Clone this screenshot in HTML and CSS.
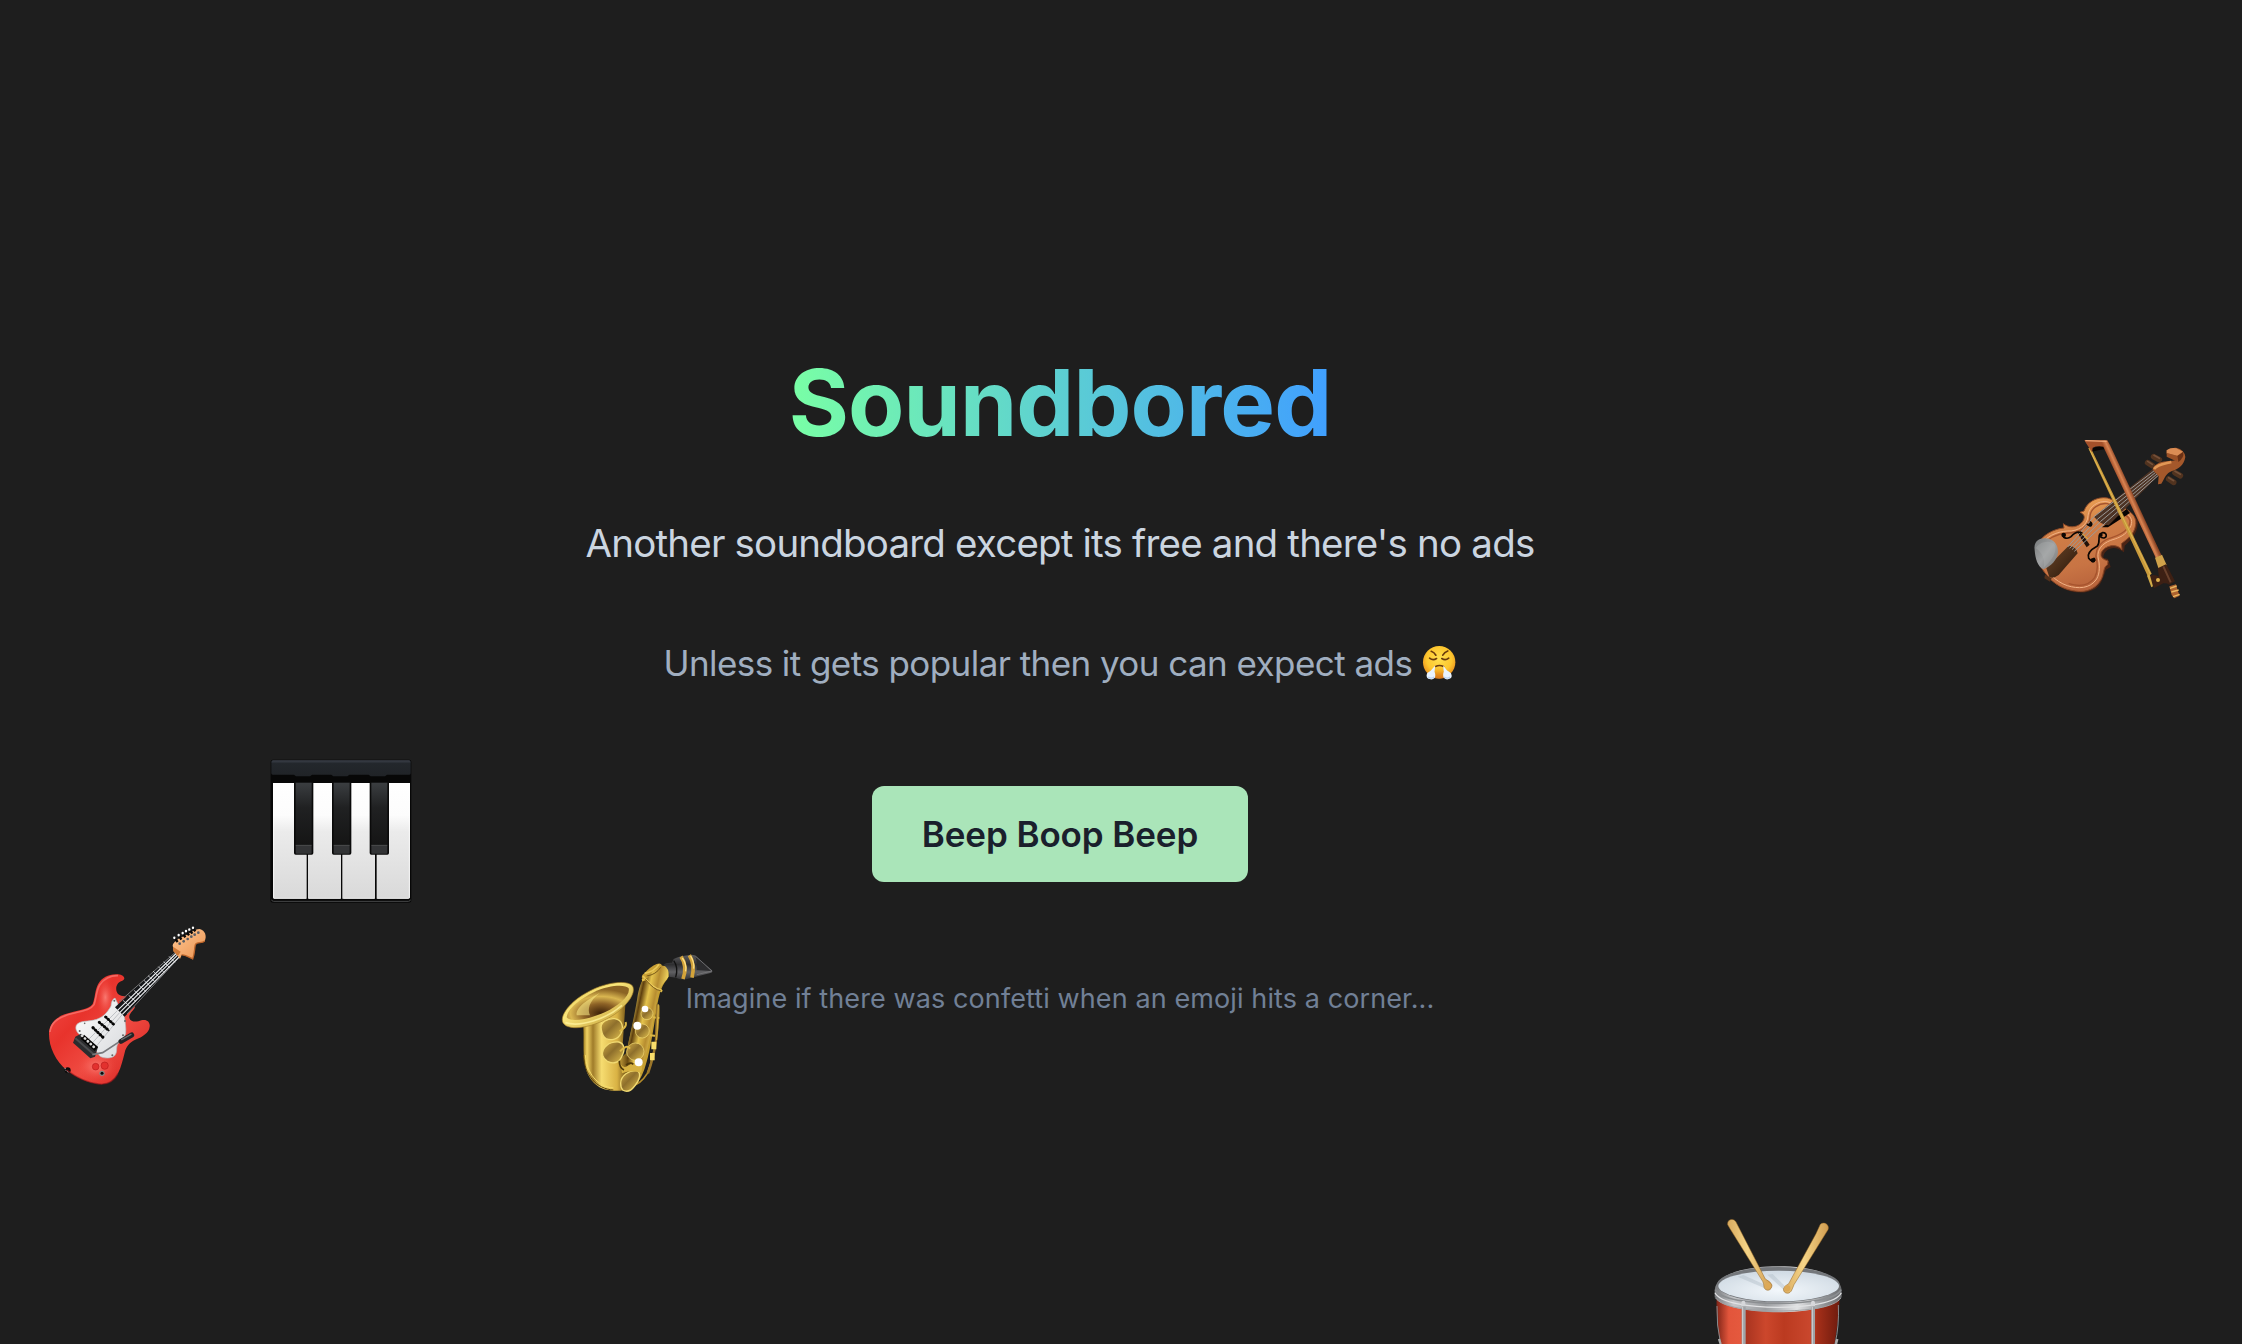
FILE: index.html
```
<!DOCTYPE html>
<html lang="en">
<head>
<meta charset="utf-8">
<title>Soundbored</title>
<link rel="stylesheet" href="styles.css">
</head>
<body>
<main class="hero">
  <h1 class="title">Soundbored</h1>
  <p class="lead">Another soundboard except its free and there's no ads</p>
  <p class="sub">Unless it gets popular then you can expect ads
    <svg class="face" viewBox="66 42 104 106">
      <defs>
        <radialGradient id="fc" cx=".5" cy=".4" r=".6"><stop offset="0" stop-color="#ffe04f"/><stop offset=".65" stop-color="#fdc62e"/><stop offset="1" stop-color="#e98c1a"/></radialGradient>
        <linearGradient id="fn" x1="0" y1="0" x2="0" y2="1"><stop offset="0" stop-color="#e88f1d" stop-opacity="0"/><stop offset="1" stop-color="#d9791b"/></linearGradient>
      </defs>
      <circle cx="117" cy="94" r="49" fill="url(#fc)"/>
      <path d="M98 108h38l-4 34q-15 4-30 0z" fill="url(#fn)"/>
      <g fill="none" stroke="#6b3a0c" stroke-width="5" stroke-linecap="round"><path d="M93 61q9 3 14 12M143 60q-10 3-15 13M88 82q10 8 21 1M125 83q11 7 21-1M106 107q12-6 24 0"/></g>
      <g fill="#eaf4ff"><path d="M105 104l-2 19q4 10 1 18-8 8-16 4-9-1-9-10-1-9 8-12l5-4z"/><path d="M129 104l2 19q-4 10 0 18 8 8 15 4 9-2 9-10 0-9-8-12l-6-4z"/></g>
      <path d="M84 139q8 7 18 0M132 139q9 7 18 0" fill="none" stroke="#b9d2f3" stroke-width="4"/>
    </svg></p>
  <button class="cta" type="button">Beep Boop Beep</button>
  <p class="note">Imagine if there was confetti when an emoji hits a corner...</p>
</main>

<svg class="emoji guitar" viewBox="0 0 570 570">
  <defs>
    <linearGradient id="gb" x1="0" y1="0" x2="1" y2="1"><stop offset="0" stop-color="#f4504c"/><stop offset=".35" stop-color="#e8332c"/><stop offset=".6" stop-color="#ef4a41"/><stop offset="1" stop-color="#d5201d"/></linearGradient>
    <radialGradient id="gs"><stop offset="0" stop-color="#ff8f86" stop-opacity=".75"/><stop offset="1" stop-color="#f0443c" stop-opacity="0"/></radialGradient>
    <linearGradient id="gh" x1="0" y1="0" x2="1" y2="1"><stop offset="0" stop-color="#ffc793"/><stop offset="1" stop-color="#eb9350"/></linearGradient>
    <linearGradient id="gp" x1="0" y1="0" x2="1" y2="1"><stop offset="0" stop-color="#fff"/><stop offset="1" stop-color="#d8dadd"/></linearGradient>
  </defs>
  <path d="M57 368C58 342 78 322 104 313C140 300 176 300 188 282C196 262 194 240 205 221C216 202 240 190 264 193C284 195 289 208 275 213C258 218 254 240 264 252C276 262 292 256 300 264C308 280 316 284 314 294C306 306 296 312 298 324C302 338 322 336 334 331C350 326 361 336 359 350C357 368 338 380 319 388C296 398 288 412 284 428C278 450 274 470 264 490C252 512 232 525 207 522C170 518 140 503 110 480C76 452 56 410 57 368Z" fill="url(#gb)"/>
  <circle cx="113" cy="481" r="9" fill="#0b0b0b"/><path d="M105 474l3 8 9 6" stroke="#bbb" stroke-width="3" stroke-dasharray="3 3" fill="none"/>
  <path d="M60 366C62 344 80 326 106 317C142 304 180 304 192 284C200 262 198 244 209 225C220 207 242 196 264 197" fill="none" stroke="#ff8a84" stroke-width="5" opacity=".6"/>
  <ellipse cx="200" cy="470" rx="60" ry="46" fill="url(#gs)"/><ellipse cx="226" cy="262" rx="28" ry="62" fill="url(#gs)"/>
  <path d="M264 490C252 512 232 525 207 522C170 518 140 503 110 480" fill="none" stroke="#a5161a" stroke-width="4" opacity=".6"/>
  <path d="M255 264C246 268 244 278 243 288C232 307 222 319 200 328C176 336 148 330 139 346C133 361 146 372 154 379C176 398 196 420 210 439C222 446 242 446 253 438C264 426 257 414 263 403C270 390 283 384 287 371C289 352 285 335 283 320Z" fill="url(#gp)" stroke="#b7babd" stroke-width="2"/>
  <path d="M434 124L452 143L284 320L255 292Z" fill="#15171a"/>
  <path d="M267 276L437 126M448 142L291 312" stroke="#777" stroke-width="3"/>
  <g stroke="#eef0f2" stroke-width="4.200"><path d="M440 129L262 302M444 134L269 308M449 139L277 313" stroke-width="3.400"/><path d="M417 139l18 18M401 155l18 18M385 170l18 18M369 183l18 18M354 197l22 19M342 211l20 19M327 226l22 20M312 241l21 19M296 256l22 19M279 271l22 20" stroke-width="2.200"/></g>
  <path d="M262 302L160 404M277 313L190 420M269 308L176 411" stroke="#bfc2c6" stroke-width="3"/>
  <path d="M227 321l26 24M208 337l30 26M189 353l31 30" stroke="#070707" stroke-width="9" stroke-linecap="round" stroke-dasharray="1 9"/>
  <path d="M227 321l26 24M208 337l30 26M189 353l31 30" stroke="#070707" stroke-width="4"/>
  <path d="M136 380L153 371L204 411L195 440L181 445L129 398Z" fill="#2b2c2e"/><path d="M136 385L190 432" stroke="#4b4c4e" stroke-width="6"/>
  <path d="M157 380L199 417" stroke="#050505" stroke-width="16"/><path d="M156 377L199 418" stroke="#ddd" stroke-width="8" stroke-linecap="round" stroke-dasharray="1 11"/>
  <path d="M187 434L218 428L273 392" fill="none" stroke="#77797c" stroke-width="5"/><path d="M273 394L305 375" stroke="#222426" stroke-width="15" stroke-linecap="round"/><path d="M275 389l28-16" stroke="#66696b" stroke-width="4" stroke-linecap="round"/>
  <g fill="#e3312e" stroke="#b91d1d" stroke-width="2"><circle cx="197" cy="470" r="10"/><circle cx="224" cy="467" r="11"/></g><circle cx="216" cy="490" r="8" fill="#888"/><circle cx="216" cy="490" r="4.500" fill="#090909"/>
  <g fill="#666"><circle cx="149" cy="363" r="3"/><circle cx="164" cy="340" r="2.500"/><circle cx="247" cy="436" r="3"/><circle cx="279" cy="376" r="3"/><circle cx="285" cy="333" r="3"/><circle cx="253" cy="272" r="3"/></g>
  <path d="M428 106C432 93 446 85 465 77C482 69 492 58 509 57C526 61 531 80 524 93C516 101 500 95 496 104C493 118 494 133 488 147C476 141 463 133 455 135L450 147L443 137L431 124Z" fill="url(#gh)"/>
  <path d="M524 93C516 101 500 95 496 104C493 118 494 133 488 147C476 141 463 133 455 135" fill="none" stroke="#bd652a" stroke-width="4"/>
  <path d="M429 110L452 125L444 138L430 124Z" fill="#cf7836"/>
  <g stroke="#080808" stroke-width="7"><path d="M433 83l10 13M446 76l8 13M458 70l8 12M469 64l8 12M479 60l8 11M488 53l8 11"/></g>
  <g stroke="#fff" stroke-width="7" stroke-linecap="round"><path d="M433 83v1M446 75v1M458 69v1M468 63v1M478 58v1M489 53v1"/></g>
  <g fill="#575c64"><circle cx="449" cy="101" r="4"/><circle cx="461" cy="94" r="4"/><circle cx="473" cy="87" r="4"/><circle cx="484" cy="80" r="4"/><circle cx="494" cy="74" r="4"/><circle cx="505" cy="68" r="4"/></g>
</svg>

<svg class="emoji piano" viewBox="0 0 510 510">
  <defs>
    <linearGradient id="pw" x1="0" y1="0" x2="0" y2="1"><stop offset="0" stop-color="#fff"/><stop offset=".28" stop-color="#fcfcfc"/><stop offset=".42" stop-color="#ebebeb"/><stop offset="1" stop-color="#d9d9d9"/></linearGradient>
    <linearGradient id="pk" x1="0" y1="0" x2="0" y2="1"><stop offset="0" stop-color="#3b3e41"/><stop offset=".4" stop-color="#202122"/><stop offset="1" stop-color="#151515"/></linearGradient>
    <linearGradient id="pt" x1="0" y1="0" x2="0" y2="1"><stop offset="0" stop-color="#3c414b"/><stop offset=".2" stop-color="#23272c"/><stop offset="1" stop-color="#202327"/></linearGradient>
    <g id="bk"><path d="M0 110h58v214q0 5-5 5H5q-5 0-5-5z" fill="#0a0a0a"/><path d="M5 113h48v186H5z" fill="url(#pk)"/><path d="M5 302h48v21q0 3-3 3H8q-3 0-3-3z" fill="#333436"/><path d="M5 301h48" stroke="#515254" stroke-width="3"/></g>
  </defs>
  <path d="M47 50q0-6 6-6h410q6 0 6 6v415q0 8-8 8H54q-8 0-8-8z" fill="#070707"/>
  <path d="M50 464q0 5 6 5h404q6 0 6-5" fill="none" stroke="#48494a" stroke-width="3"/>
  <path d="M49 51q0-5 5-5h408q5 0 5 5v34q0 4-4 4H396l-6 5h-43l-6-5h-58l-6 5h-42l-6-5h-58l-6 5h-42l-6-5H53q-4 0-4-4z" fill="url(#pt)"/>
  <path d="M54 114h101v347H58q-4 0-4-4zM159 114h99v347h-99zM262 114h98v347h-98zM365 114h100v343q0 4-4 4h-96z" fill="url(#pw)"/>
  <path d="M56 116v343M463 116v343M56 460h97M162 460h94M265 460h93M367 460h94" stroke="#fff" stroke-width="2"/>
  <use href="#bk" x="117"/><use href="#bk" x="231"/><use href="#bk" x="344"/>
</svg>

<svg class="emoji sax" viewBox="0 0 540 495">
  <defs>
    <linearGradient id="sb" x1="0" y1="0" x2="1" y2="0"><stop offset="0" stop-color="#8f6c12"/><stop offset=".05" stop-color="#f0d263"/><stop offset=".12" stop-color="#a07c2a"/><stop offset=".22" stop-color="#f6dc70"/><stop offset=".4" stop-color="#d9b244"/><stop offset=".52" stop-color="#6b4c12"/><stop offset=".6" stop-color="#c49d30"/><stop offset="1" stop-color="#c49d30"/></linearGradient>
    <linearGradient id="sr" x1="0" y1="0" x2="1" y2="1"><stop offset="0" stop-color="#dfbd45"/><stop offset=".4" stop-color="#fae77c"/><stop offset="1" stop-color="#b8902a"/></linearGradient>
    <radialGradient id="si" cx=".55" cy=".8" r=".7"><stop offset="0" stop-color="#3b2008"/><stop offset=".4" stop-color="#8d6226"/><stop offset=".7" stop-color="#d9b650"/><stop offset="1" stop-color="#8b6424"/></radialGradient>
    <linearGradient id="sp" x1="0" y1="0" x2="1" y2="1"><stop offset="0" stop-color="#cfaa45"/><stop offset=".45" stop-color="#8e6f2c"/><stop offset="1" stop-color="#e2c04e"/></linearGradient>
    <linearGradient id="sn" gradientUnits="userSpaceOnUse" x1="240" y1="230" x2="325" y2="248"><stop offset="0" stop-color="#f1d763"/><stop offset=".22" stop-color="#5e3f0e"/><stop offset=".45" stop-color="#e5c34c"/><stop offset=".7" stop-color="#b78d30"/><stop offset="1" stop-color="#f0d45f"/></linearGradient>
    <linearGradient id="sm" x1="0" y1="0" x2="0" y2="1"><stop offset="0" stop-color="#5d5d60"/><stop offset=".4" stop-color="#2f2f31"/><stop offset=".7" stop-color="#606063"/><stop offset="1" stop-color="#333335"/></linearGradient>
  </defs>
  <path d="M326 196C328 260 315 340 292 400C280 420 262 436 240 440" fill="none" stroke="#b38b2a" stroke-width="5"/>
  <path d="M98 240C104 280 97 330 104 370C112 418 140 450 188 452C220 454 252 450 268 420C292 385 305 300 318 220C324 180 330 140 352 118L356 80L322 74C282 92 270 130 264 180C256 230 238 290 228 340L216 350C218 310 222 260 226 195Z" fill="url(#sb)"/>
  <path d="M322 76C284 92 268 130 261 180C252 235 238 290 228 345C236 370 252 384 272 388C300 320 312 230 322 165C330 138 346 124 356 110L356 82Z" fill="url(#sn)"/>
  <path d="M101 345C102 405 140 447 190 450" fill="none" stroke="#5f4509" stroke-width="3"/><path d="M106 345C110 400 143 440 190 444" fill="none" stroke="#f5dc6a" stroke-width="3"/>
  <path d="M39 248C28 226 62 184 110 158C162 128 228 118 247 137C260 158 232 195 194 223C140 260 56 278 39 248Z" fill="url(#sr)" stroke="#a5802a" stroke-width="2"/>
  <path d="M50 232C52 205 94 174 134 155C176 136 226 132 236 145C242 166 206 197 166 216C122 236 62 250 50 232Z" fill="url(#si)"/>
  <path d="M80 226C76 200 116 178 150 158C116 184 112 208 120 226Z" fill="#fff08b" opacity=".55"/><path d="M46 248C90 262 168 238 216 196" fill="none" stroke="#fff39b" stroke-width="5" opacity=".8"/>
  <path d="M277 118q-5-12 6-18q18-20 37-28q12-5 16 4l-8 8q-22 6-36 30z" fill="#c89f34"/><path d="M279 108q32 40 56 42M284 100q30-6 43-27" fill="none" stroke="#e9c85a" stroke-width="5"/><path d="M276 121l12-4M331 155l5-5" stroke="#e5c14a" stroke-width="7"/>
  <path d="M290 108q28-4 42-26M286 118q26 32 46 34" fill="none" stroke="#7a5a18" stroke-width="3"/>
  <g fill="url(#sp)" stroke="#f1da72" stroke-width="4">
    <path d="M154 270C148 248 172 234 194 236C218 240 222 262 212 282C202 300 182 302 168 296C158 290 156 280 154 270Z"/>
    <path d="M158 346C154 322 178 304 206 306C224 310 226 330 215 350C206 370 188 372 172 364C164 358 160 354 158 346Z"/>
    <path d="M212 430C212 406 238 390 260 392C276 398 268 422 254 438C242 454 228 456 218 450Q212 444 212 430Z"/>
    <circle cx="256" cy="335" r="26" stroke-width="2"/><circle cx="277" cy="273" r="21" stroke-width="2"/><circle cx="291" cy="221" r="18" stroke-width="2"/>
  </g>
  <path d="M209 274l13-10q8-8 5-18M210 334q20-22 30-8M300 286l20 2M308 232l20 2" fill="none" stroke="#dcb846" stroke-width="6"/>
  <path d="M322 193L318 300Q313 346 294 400" fill="none" stroke="#9b762a" stroke-width="7"/><path d="M325 193L320 300" stroke="#dcb846" stroke-width="3"/>
  <path d="M304 305h15v23h-15zM300 339h14v22h-14z" fill="#f8dd6b"/>
  <path d="M210 370q10 18 26 6t42-4l-4 26q-30-10-58 2z" fill="#d7b241"/><path d="M208 362q0 22 14 28M228 375q14-10 22-2" fill="none" stroke="#4e390a" stroke-width="5"/>
  <g fill="#fff"><circle cx="285" cy="207" r="10"/><circle cx="262" cy="257" r="12"/><circle cx="266" cy="367" r="12"/></g>
  <path d="M341 74Q346 67 366 68L371 57Q390 47 425 44L434 46L486 91Q490 98 478 100L408 118Q388 120 378 113L358 110Q359 88 341 74Z" fill="url(#sm)"/>
  <path d="M437 50L484 93L440 90Q444 70 437 50Z" fill="#2c2c2e"/><path d="M436 48L486 93L440 104" fill="none" stroke="#77777a" stroke-width="2.500"/>
  <path d="M371 62q15 20 6 50" fill="none" stroke="#111" stroke-width="4"/>
  <path d="M393 50q20 28 6 67M418 46q18 28 8 67" fill="none" stroke="#d3a33a" stroke-width="11"/><path d="M397 54q14 20 10 40M422 48q12 20 9 38" fill="none" stroke="#ffe084" stroke-width="4"/>
</svg>

<svg class="emoji violin" viewBox="0 0 540 555">
  <defs>
    <linearGradient id="vb" x1=".3" y1="0" x2=".6" y2="1"><stop offset="0" stop-color="#f1a857"/><stop offset=".35" stop-color="#cf7d46"/><stop offset=".7" stop-color="#c87444"/><stop offset="1" stop-color="#b5603a"/></linearGradient>
    <linearGradient id="vc" x1="0" y1="0" x2="1" y2="1"><stop offset="0" stop-color="#777a7b"/><stop offset=".5" stop-color="#a0a2a3"/><stop offset="1" stop-color="#777"/></linearGradient>
    <linearGradient id="vw" gradientUnits="userSpaceOnUse" x1="325" y1="230" x2="345" y2="221"><stop offset="0" stop-color="#a4502a"/><stop offset=".5" stop-color="#d98452"/><stop offset="1" stop-color="#8f4726"/></linearGradient>
    <linearGradient id="vt" x1="0" y1="0" x2="1" y2="1"><stop offset="0" stop-color="#6b4426"/><stop offset=".5" stop-color="#4a2e19"/><stop offset="1" stop-color="#281509"/></linearGradient>
  </defs>
  <path d="M96 466C130 505 190 512 225 492C244 480 250 456 258 434L272 426L264 402L250 398C250 376 276 362 296 372L312 382L314 362C338 340 356 320 353 285L340 270Z" fill="#4c2415"/>
  <path d="M52 360C66 330 100 312 132 309L130 296C144 308 168 310 184 294C198 278 194 268 180 262L192 258C200 232 230 214 262 219C282 224 296 240 318 252C338 264 352 280 346 304C342 328 322 342 304 356L306 374C290 354 256 360 244 382C240 396 246 402 264 408L262 420C250 424 252 446 244 462C230 490 200 504 166 498C132 494 100 476 82 452C60 428 44 396 52 360Z" fill="url(#vb)" stroke="#8f4a27" stroke-width="3"/>
  <path d="M61 362C76 336 108 320 142 318C174 320 204 300 204 272C206 244 236 226 262 230C284 236 300 256 320 266C340 278 338 300 326 314C310 336 290 340 272 346C246 356 232 374 234 396C240 420 240 444 230 462C210 492 174 492 142 482C124 476 106 464 92 450" fill="none" stroke="#f2b184" stroke-width="3"/>
  <path d="M66 364C84 340 110 326 142 324C180 324 210 304 210 274C212 250 238 233 262 236C284 242 300 260 318 272C334 282 332 298 322 310C306 330 286 334 268 340C240 350 226 374 228 396C234 420 234 440 224 458C206 484 174 484 146 476" fill="none" stroke="#a6542e" stroke-width="4"/>
  <path d="M246 307L320 252L330 264L264 307Z" fill="#070403"/>
  <path d="M398 132L414 153L266 301Q240 298 222 275Z" fill="#4d3324"/>
  <path d="M79 430L146 362Q168 362 173 385L116 450Q100 462 88 456Z" fill="url(#vt)"/><path d="M75 449l20 11-5 10-17-10z" fill="#51301b"/>
  <path d="M181 318L209 359L200 367L174 326Z" fill="#221108"/>
  <g fill="none" stroke="#9b9997" stroke-width="3"><path d="M403 137L222 275L143 366M407 142L232 283L149 370M411 147L242 289L156 374M414 152L252 297L163 379"/></g>
  <path d="M177 318l27 24" stroke="#e2b033" stroke-width="3"/>
  <g fill="none" stroke="#0b0603" stroke-width="5" stroke-linecap="round"><path d="M133 328C122 338 142 344 153 335C168 318 178 320 186 324M202 298C212 306 220 296 211 291"/><path d="M243 337C262 346 264 322 248 323C228 328 244 350 232 363C212 374 200 386 206 400C216 414 230 408 222 400"/></g>
  <circle cx="131" cy="330" r="7" fill="#0b0603"/><circle cx="242" cy="330" r="6" fill="#0b0603"/><circle cx="219" cy="406" r="7" fill="#0b0603"/><circle cx="211" cy="299" r="6" fill="#0b0603"/>
  <path d="M44 376C40 350 56 338 78 340C102 342 114 360 114 382C112 406 92 424 70 433C52 424 46 400 44 376Z" fill="url(#vc)"/><path d="M48 370C54 352 92 340 106 362C110 388 90 410 71 428C76 400 66 384 48 370Z" fill="#b4b6b7" opacity=".3"/>
  <g stroke="#51331f" stroke-width="17" stroke-linecap="round"><path d="M383 113l14 9M401 95l17 9M465 143l16 9M446 162l15 10"/></g><g stroke="#745039" stroke-width="5" stroke-linecap="round"><path d="M383 109l14 9M402 91l16 9M465 139l16 9M446 158l15 9"/></g>
  <path d="M398 134C404 112 428 110 446 108C462 106 474 106 468 98L440 87L440 76Q452 67 468 68Q494 74 496 96C492 122 474 132 456 138C438 144 434 160 424 176L414 178L416 154Z" fill="#a4582b"/>
  <path d="M402 132C412 118 436 116 454 111" fill="none" stroke="#e19755" stroke-width="8"/><path d="M440 76Q453 66 469 70L489 80L472 92L440 84Z" fill="#da8c54"/><path d="M440 84l32 9v17l-32-15z" fill="#9a5026"/><path d="M472 93l17-12q5 16-14 30z" fill="#693116"/>
  <path d="M213 82C236 74 250 72 257 75L254 62Q230 63 217 70Z" fill="#080504"/>
  <path d="M205 70L211 66L395 446L384 455Z" fill="#c99a3b"/><path d="M210 76L391 447" stroke="#e8c461" stroke-width="2"/>
  <path d="M193 45Q230 44 262 46L270 60L424 390L408 400L250 65Q230 62 218 68L216 82L198 54Z" fill="url(#vw)"/><path d="M196 47L260 49" stroke="#f0a879" stroke-width="4"/>
  <path d="M405 398L426 389L440 420L416 432Z" fill="#d0a24a"/><path d="M413 430L438 418L446 432L465 469L448 479Q440 474 430 475L402 490L388 454Q402 446 417 455Z" fill="#3d2014"/><path d="M430 424l22 48" stroke="#69412c" stroke-width="6"/>
  <path d="M381 452l8-4 10 36-5 3z" fill="#d3ab48"/><circle cx="414" cy="465" r="6" fill="#e0b04b"/><path d="M448 484l20-6 5 18 6 16-16 8-8-10z" fill="#ad622e"/><path d="M450 490l20-7M454 501l22-6M459 515l20-7" stroke="#eab862" stroke-width="4"/>
</svg>

<svg class="emoji drum" viewBox="0 0 480 417">
  <defs>
    <linearGradient id="db" x1="0" y1="0" x2="1" y2="0"><stop offset="0" stop-color="#7e2417"/><stop offset=".1" stop-color="#e2553b"/><stop offset=".2" stop-color="#e5593e"/><stop offset=".24" stop-color="#a93420"/><stop offset=".4" stop-color="#cc472c"/><stop offset=".55" stop-color="#bb3a20"/><stop offset=".76" stop-color="#c9472d"/><stop offset=".82" stop-color="#a52f19"/><stop offset="1" stop-color="#6e1b0e"/></linearGradient>
    <linearGradient id="dr" x1="0" y1="0" x2="1" y2="0"><stop offset="0" stop-color="#77797c"/><stop offset=".15" stop-color="#c5c6c9"/><stop offset=".4" stop-color="#9b9da0"/><stop offset=".65" stop-color="#e1e2e4"/><stop offset=".85" stop-color="#96989b"/><stop offset="1" stop-color="#696b6e"/></linearGradient>
    <radialGradient id="dh" cx=".5" cy=".65" r=".6"><stop offset="0" stop-color="#f2f7fb"/><stop offset="1" stop-color="#d2dce5"/></radialGradient>
    <linearGradient id="ds" x1="0" y1="0" x2="1" y2="0"><stop offset="0" stop-color="#d9ab60"/><stop offset=".45" stop-color="#f5d487"/><stop offset="1" stop-color="#d09c50"/></linearGradient>
  </defs>
  <path d="M50 275H418C420 330 408 380 404 417H60C54 370 48 330 50 275Z" fill="url(#db)"/>
  <path d="M44 255C46 210 130 184 235 184S422 210 425 255V274C412 306 320 322 235 322S56 306 44 274Z" fill="url(#dr)"/>
  <path d="M46 278C66 308 150 318 235 318S406 308 423 278" fill="none" stroke="#a0a2a5" stroke-width="3"/>
  <path d="M45 263C60 294 150 307 235 307S410 294 424 263" fill="none" stroke="#e1e2e4" stroke-width="4"/>
  <path d="M46 254C60 284 150 295 235 295S410 284 423 254" fill="none" stroke="#8b8e91" stroke-width="5"/>
  <ellipse cx="235" cy="239" rx="184" ry="53" fill="#74777b"/><ellipse cx="236" cy="243" rx="181" ry="46" fill="url(#dh)"/>
  <path d="M113 215L198 251L205 244L130 210ZM202 209L260 263L270 258L218 207Z" fill="#acb9c4" opacity=".4"/>
  <path d="M124 293q0-6 6-6t6 6v12h-12zM333 293q0-6 6-6t6 6v12h-12z" fill="#d6d7da"/><path d="M125 304h12v113h-12zM334 304h11v113h-11z" fill="#9fa2a5"/><path d="M128 305v112M337 305v112" stroke="#d1d3d5" stroke-width="3"/>
  <path d="M51 303Q49 360 62 417M415 300Q418 362 405 417" fill="none" stroke="#888b8e" stroke-width="3"/><path d="M57 402l5 15M412 402l-4 15" stroke="#aaa" stroke-width="7"/>
  <g fill="url(#ds)" stroke="#936524" stroke-width="1.500"><path d="M83 59C80 42 102 38 108 51L196 222Q212 230 216 240C216 258 197 261 192 247Q192 236 188 229L90 71Z"/><path d="M361 58C372 48 390 60 384 74L282 239Q278 250 274 258C264 272 247 262 251 250Q254 242 266 236L348 86Z"/></g>
  <circle cx="204" cy="242" r="9" fill="#dda957"/><circle cx="262" cy="250" r="9" fill="#dda957"/>
</svg>
</body>
</html>
```
FILE: styles.css
```
* { box-sizing: border-box; }
body {
  margin: 0;
  height: 100vh;
  overflow: hidden;
  position: relative;
  background: #1e1e1e;
  font-family: Inter, "Liberation Sans", sans-serif;
}
.hero {
  width: 2120px;
  padding-top: 347px;
  display: flex;
  flex-direction: column;
  align-items: center;
  text-align: center;
}
.title, .lead, .sub, .note { margin: 0; white-space: nowrap; }
.title {
  font-size: 92px;
  line-height: 112px;
  font-weight: 700;
  letter-spacing: -0.9px;
  background: linear-gradient(to right, #79ffa5, #409fff);
  -webkit-background-clip: text;
  background-clip: text;
  color: transparent;
}
.lead {
  margin-top: 54px;
  font-size: 38.5px;
  line-height: 60px;
  letter-spacing: -0.81px;
  color: #cbd5e0;
}
.sub {
  margin-top: 63px;
  font-size: 35px;
  line-height: 54px;
  letter-spacing: -0.56px;
  color: #a0aec0;
}
.face { width: 35px; height: 35px; vertical-align: -4px; }
.cta {
  margin-top: 96px;
  width: 376px;
  height: 96px;
  padding: 0;
  border: 0;
  border-radius: 12px;
  background: #aae5b9;
  color: #1a202c;
  font: 600 35px/96px Inter, "Liberation Sans", sans-serif;
  letter-spacing: -0.1px;
}
.note {
  margin-top: 96px;
  font-size: 27px;
  line-height: 42px;
  letter-spacing: 0.1px;
  color: #718096;
}
.emoji { position: absolute; }
.guitar { left: 30px; top: 910px; width: 190px; height: 190px; }
.piano { left: 255px; top: 745px; width: 170px; height: 170px; }
.sax { left: 550px; top: 940px; width: 180px; height: 165px; }
.violin { left: 2020px; top: 425px; width: 180px; height: 185px; }
.drum { left: 1700px; top: 1205px; width: 160px; height: 139px; }
```
